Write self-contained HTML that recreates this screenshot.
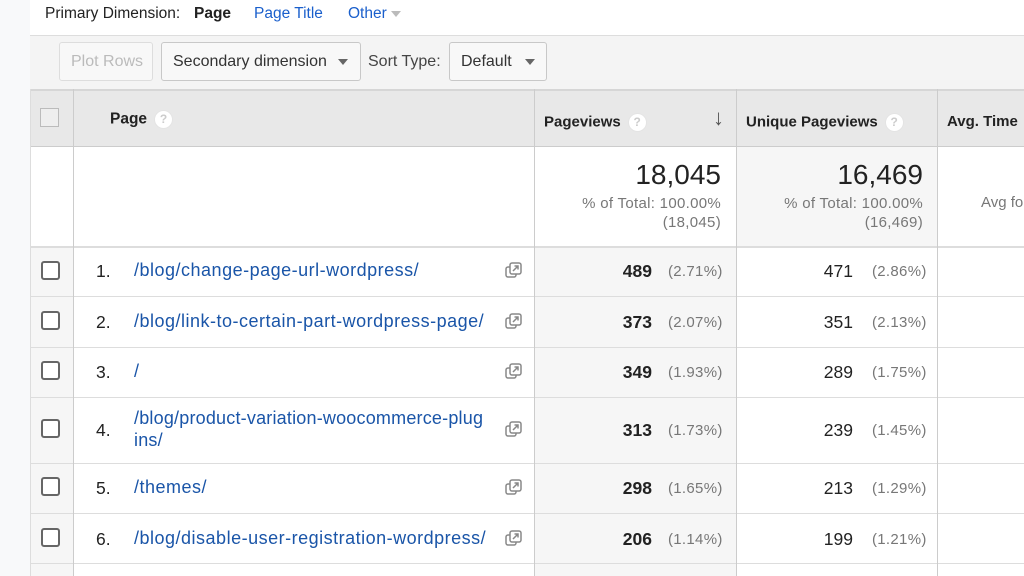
<!DOCTYPE html>
<html><head><style>
*{box-sizing:border-box;margin:0;padding:0}
body{width:1024px;height:576px;overflow:hidden;background:#fff;font-family:"Liberation Sans",Roboto,sans-serif;position:relative;color:#222}
.a{position:absolute}
.bar{background:#f4f4f4}
.btn{position:absolute;border:1px solid #c8c8c8;border-radius:3px;background:#f8f8f8;font-size:16px;color:#333;line-height:38px;padding-left:11px}
.tri{position:absolute;width:0;height:0;border-left:5px solid transparent;border-right:5px solid transparent;border-top:6px solid #666}
.hl{position:absolute;height:1px;background:#ddd;left:30px;right:0}
.vl{position:absolute;width:1px;background:#ccc}
.q{display:inline-block;width:19px;height:19px;border-radius:50%;background:#fff;border:1px solid #e4e4e4;color:#ccc;font-size:12px;text-align:center;line-height:17px;font-weight:bold;vertical-align:middle;margin-left:7px}
.cb{position:absolute;left:41px;width:19px;height:19px;border:2px solid #666;border-radius:3px;background:#fff}
.num{position:absolute;font-size:17.5px;color:#222}
.lnk{color:#1a55a8 !important;font-size:18px;letter-spacing:0.5px}
.pc{font-size:15px;color:#777 !important;letter-spacing:0.3px}
.ico{position:absolute;left:505px;width:17px;height:17px}
</style></head><body>
<div class="a" style="left:0;top:0;width:30px;height:576px;background:#f8f9fa"></div>
<div class="a" style="left:45px;top:5px;font-size:15.5px;color:#222">Primary Dimension:</div>
<div class="a" style="left:194px;top:5px;font-size:15.5px;font-weight:bold">Page</div>
<div class="a" style="left:254px;top:5px;font-size:15.5px;color:#1a5fcc">Page Title</div>
<div class="a" style="left:348px;top:5px;font-size:15.5px;color:#1a5fcc">Other</div>
<div class="tri" style="left:391px;top:11px;border-top-color:#bbb"></div>
<div class="a bar" style="left:30px;top:35px;right:0;height:54px;border-top:1px solid #ddd"></div>
<div class="btn" style="left:59px;top:42px;width:94px;height:39px;color:#bbb;border-color:#ddd">Plot Rows</div>
<div class="btn" style="left:161px;top:42px;width:200px;height:39px">Secondary dimension</div>
<div class="tri" style="left:338px;top:59px"></div>
<div class="a" style="left:368px;top:53px;font-size:16px;color:#444">Sort Type:</div>
<div class="btn" style="left:449px;top:42px;width:98px;height:39px">Default</div>
<div class="tri" style="left:525px;top:59px"></div>
<!-- header -->
<div class="a" style="left:30px;top:89px;right:0;height:58px;background:#e8e8e8;border-top:2px solid #d6d6d6;border-bottom:1px solid #ccc"></div>
<div class="a" style="left:40px;top:108px;width:19px;height:19px;border:1px solid #bbb;background:#eee"></div>
<div class="a" style="left:110px;top:110px;font-size:15.5px;font-weight:bold">Page<span class="q">?</span></div>
<div class="a" style="left:544px;top:113px;font-size:15px;font-weight:bold">Pageviews<span class="q">?</span></div>
<div class="a" style="left:713px;top:105px;font-size:22px;color:#555;font-weight:bold">↓</div>
<div class="a" style="left:746px;top:113px;font-size:15px;font-weight:bold">Unique Pageviews<span class="q">?</span></div>
<div class="a" style="left:947px;top:113px;font-size:15px;font-weight:bold">Avg. Time</div>
<!-- totals -->
<div class="a" style="left:737px;top:147px;width:200px;height:99px;background:#f6f6f6"></div>
<div class="a" style="left:535px;top:159px;width:186px;text-align:right;font-size:28px;color:#222">18,045</div>
<div class="a" style="left:520px;top:194px;width:201px;text-align:right;font-size:15px;color:#777;line-height:19px;letter-spacing:0.3px">% of Total: 100.00%<br>(18,045)</div>
<div class="a" style="left:737px;top:159px;width:186px;text-align:right;font-size:28px;color:#222">16,469</div>
<div class="a" style="left:722px;top:194px;width:201px;text-align:right;font-size:15px;color:#777;line-height:19px;letter-spacing:0.3px">% of Total: 100.00%<br>(16,469)</div>
<div class="a" style="left:981px;top:194px;font-size:15px;color:#777">Avg fo</div>
<!-- data backgrounds -->
<div class="a" style="left:30px;top:247px;width:43px;height:329px;background:#f6f6f6"></div>
<div class="a" style="left:535px;top:247px;width:201px;height:329px;background:#f6f6f6"></div>
<div class="hl" style="top:246px;height:2px;background:#ddd"></div>
<div class="hl" style="top:296px"></div>
<div class="hl" style="top:347px"></div>
<div class="hl" style="top:397px"></div>
<div class="hl" style="top:463px"></div>
<div class="hl" style="top:513px"></div>
<div class="hl" style="top:563px"></div>
<div class="vl" style="left:30px;top:89px;height:487px;background:#ddd"></div>
<div class="vl" style="left:73px;top:89px;height:487px"></div>
<div class="vl" style="left:534px;top:89px;height:487px"></div>
<div class="vl" style="left:736px;top:89px;height:487px"></div>
<div class="vl" style="left:937px;top:89px;height:487px"></div>
<svg width="0" height="0" style="position:absolute"><defs><g id="ic"><rect x="1" y="5" width="10" height="10" rx="2" fill="#fff" stroke="#888" stroke-width="1.5"/><rect x="5" y="1" width="11" height="11" rx="2" fill="#fff" stroke="#888" stroke-width="1.5"/><path d="M8 9 L13 4 M9.5 4 H13 V7.5" stroke="#888" stroke-width="1.5" fill="none"/></g></defs></svg>
<!-- rows -->
<div class="cb" style="top:261px"></div><div class="num" style="left:96px;top:261px">1.</div><div class="num lnk" style="left:134px;top:260px">/blog/change-page-url-wordpress/</div><svg class="ico" style="top:262px"><use href="#ic"/></svg>
<div class="num" style="left:540px;top:261px;width:112px;text-align:right;font-weight:bold">489</div><div class="num pc" style="left:668px;top:263px">(2.71%)</div>
<div class="num" style="left:740px;top:261px;width:113px;text-align:right">471</div><div class="num pc" style="left:872px;top:263px">(2.86%)</div>

<div class="cb" style="top:311px"></div><div class="num" style="left:96px;top:312px">2.</div><div class="num lnk" style="left:134px;top:311px">/blog/link-to-certain-part-wordpress-page/</div><svg class="ico" style="top:313px"><use href="#ic"/></svg>
<div class="num" style="left:540px;top:312px;width:112px;text-align:right;font-weight:bold">373</div><div class="num pc" style="left:668px;top:314px">(2.07%)</div>
<div class="num" style="left:740px;top:312px;width:113px;text-align:right">351</div><div class="num pc" style="left:872px;top:314px">(2.13%)</div>

<div class="cb" style="top:361px"></div><div class="num" style="left:96px;top:362px">3.</div><div class="num lnk" style="left:134px;top:361px">/</div><svg class="ico" style="top:363px"><use href="#ic"/></svg>
<div class="num" style="left:540px;top:362px;width:112px;text-align:right;font-weight:bold">349</div><div class="num pc" style="left:668px;top:364px">(1.93%)</div>
<div class="num" style="left:740px;top:362px;width:113px;text-align:right">289</div><div class="num pc" style="left:872px;top:364px">(1.75%)</div>

<div class="cb" style="top:419px"></div><div class="num" style="left:96px;top:420px">4.</div><div class="num lnk" style="left:134px;top:407px;line-height:22px;letter-spacing:0.2px">/blog/product-variation-woocommerce-plug<br>ins/</div><svg class="ico" style="top:421px"><use href="#ic"/></svg>
<div class="num" style="left:540px;top:420px;width:112px;text-align:right;font-weight:bold">313</div><div class="num pc" style="left:668px;top:422px">(1.73%)</div>
<div class="num" style="left:740px;top:420px;width:113px;text-align:right">239</div><div class="num pc" style="left:872px;top:422px">(1.45%)</div>

<div class="cb" style="top:477px"></div><div class="num" style="left:96px;top:478px">5.</div><div class="num lnk" style="left:134px;top:477px">/themes/</div><svg class="ico" style="top:479px"><use href="#ic"/></svg>
<div class="num" style="left:540px;top:478px;width:112px;text-align:right;font-weight:bold">298</div><div class="num pc" style="left:668px;top:480px">(1.65%)</div>
<div class="num" style="left:740px;top:478px;width:113px;text-align:right">213</div><div class="num pc" style="left:872px;top:480px">(1.29%)</div>

<div class="cb" style="top:528px"></div><div class="num" style="left:96px;top:529px">6.</div><div class="num lnk" style="left:134px;top:528px">/blog/disable-user-registration-wordpress/</div><svg class="ico" style="top:530px"><use href="#ic"/></svg>
<div class="num" style="left:540px;top:529px;width:112px;text-align:right;font-weight:bold">206</div><div class="num pc" style="left:668px;top:531px">(1.14%)</div>
<div class="num" style="left:740px;top:529px;width:113px;text-align:right">199</div><div class="num pc" style="left:872px;top:531px">(1.21%)</div>
</body></html>
